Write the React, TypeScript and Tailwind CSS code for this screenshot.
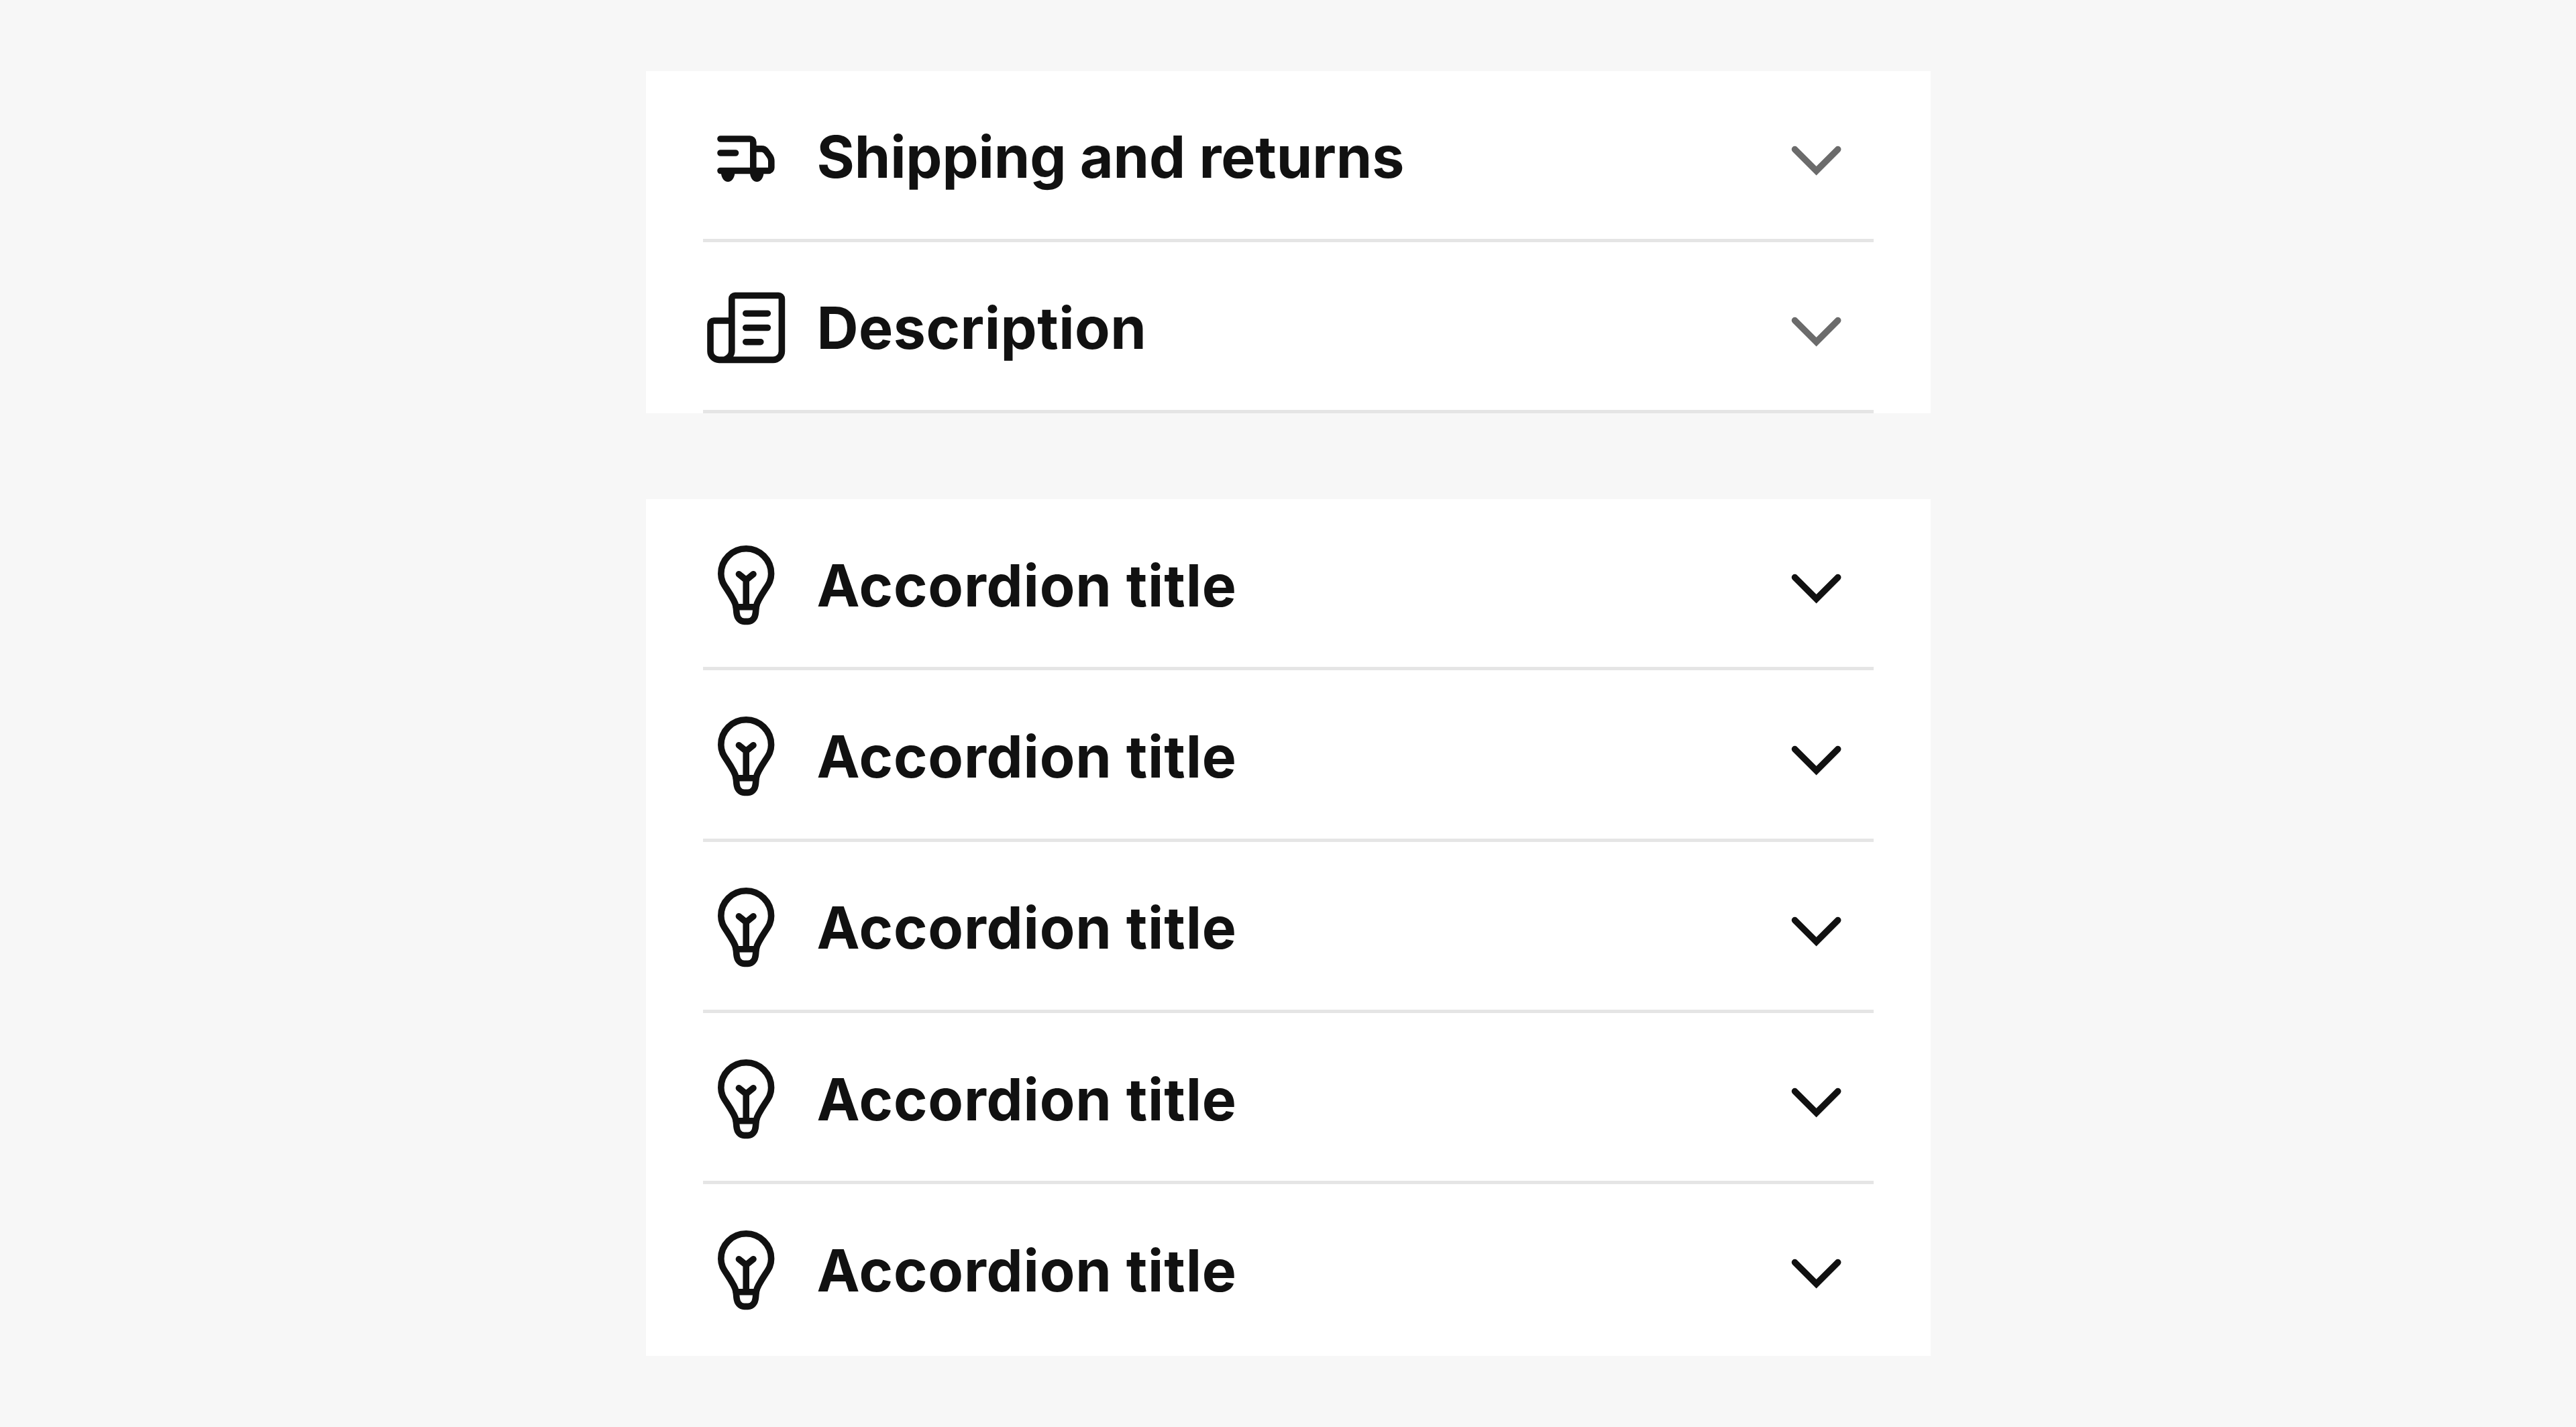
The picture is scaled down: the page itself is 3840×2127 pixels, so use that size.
import { useState } from 'react';
import type { ReactNode } from 'react';
import clsx from 'clsx';

interface Item {
  title: string;
  icon: ReactNode;
  tracking: string;
}

const iconProps = {
  viewBox: '0 0 128 128',
  fill: 'none',
  stroke: 'currentColor',
  strokeWidth: 9.6,
  strokeLinecap: 'round' as const,
  strokeLinejoin: 'round' as const,
  className: 'w-32 h-32 shrink-0',
};

function TruckIcon() {
  return (
    <svg {...iconProps}>
      <path d="M26 38H69.8a5 5 0 0 1 5 5V85M26 59H48.5M26 85.5H97.3a4.5 4.5 0 0 0 4.5-4.5V71c0-4-1-6-3.5-9l-4-5.5c-2-2.6-4-3.6-7-3.6H75" />
      <path d="M26.8 87H47.5c0 9-5 15-10.35 15S26.8 96 26.8 87ZM69.900 87H90.6c0 9-5 15-10.35 15S69.9 96 69.9 87Z" fill="currentColor" stroke="none" />
    </svg>
  );
}

function DocumentIcon() {
  return (
    <svg {...iconProps}>
      <path d="M42.8 54H16a5 5 0 0 0-5 5V99a13 13 0 0 0 13 13.4H104.400a13 13 0 0 0 13-13V21.500a5 5 0 0 0-5-5H47.8a5 5 0 0 0-5 5V99c0 6-5 11-11 13.4" />
      <path d="M63.8 43.2H96.3M63.8 64.5H96.3M63.8 85.7H85.8" />
    </svg>
  );
}

function BulbIcon() {
  return (
    <svg {...iconProps}>
      <path d="M49.2 96.7C48.6 92.5 47.8 90.500 45.500 86.500C42.500 81 39.500 76 35.500 70C30 62 26.800 56.500 26.800 47.200a37.400 37.400 0 0 1 74.800 0C101.600 56.500 98.400 62 92.900 70C88.900 76 85.900 81 82.900 86.500C80.600 90.500 79.800 92.500 79.200 96.700" />
      <path d="M49.200 96.700H79.200L78.400 105.500C77.600 113 73.500 118.400 67 118.400H61.400C54.900 118.400 50.800 113 50 105.500ZM64.200 96.700V57M53.400 47.700L64.200 56.500L75 47.700" />
    </svg>
  );
}

function Chevron({ open }: { open: boolean }) {
  return (
    <svg viewBox="0 0 85 85" fill="none" stroke="currentColor" strokeWidth={9.6} strokeLinecap="round"
      className={clsx('w-[85px] h-[85px] shrink-0', open && 'rotate-180')}>
      <path d="M10.5 31.6L42.6 63.700L74.7 31.6" />
    </svg>
  );
}

interface AccordionProps {
  items: Item[];
  chevronClass: string;
  lastDivider?: boolean;
}

function Accordion({ items, chevronClass, lastDivider = false }: AccordionProps) {
  const [openIndex, setOpenIndex] = useState<number | null>(null);

  return (
    <div className="w-[1915px] bg-white px-[85px]">
      {items.map((item, i) => (
        <div key={i} className="relative">
          <button
            onClick={() => setOpenIndex(openIndex === i ? null : i)}
            aria-expanded={openIndex === i}
            className="flex items-center w-full h-[255.3px] pr-[42.5px] text-left text-[#111111]"
          >
            {item.icon}
            <span className={clsx('flex-1 ml-[42px] pt-[2px] text-[86px] leading-none font-[650] whitespace-nowrap', item.tracking)}>
              {item.title}
            </span>
            <span className={chevronClass}><Chevron open={openIndex === i} /></span>
          </button>
          {(lastDivider || i < items.length - 1) && (
            <div className="absolute inset-x-0 bottom-0 h-[5px] bg-[#e5e5e5]" />
          )}
        </div>
      ))}
    </div>
  );
}

const productItems: Item[] = [
  { title: 'Shipping and returns', icon: <TruckIcon />, tracking: 'tracking-[-0.1px]' },
  { title: 'Description', icon: <DocumentIcon />, tracking: 'tracking-[0.5px]' },
];

const genericItems: Item[] = Array.from({ length: 5 }, () => ({
  title: 'Accordion title',
  icon: <BulbIcon />,
  tracking: 'tracking-[0.8px]',
}));

export default function App() {
  return (
    <div className="h-[2127px] bg-[#f7f7f7] flex flex-col items-center gap-32 pt-[105.5px] font-['Inter',sans-serif]">
      <Accordion items={productItems} chevronClass="text-[#6b6b6b]" lastDivider />
      <Accordion items={genericItems} chevronClass="text-[#111111]" />
    </div>
  );
}
